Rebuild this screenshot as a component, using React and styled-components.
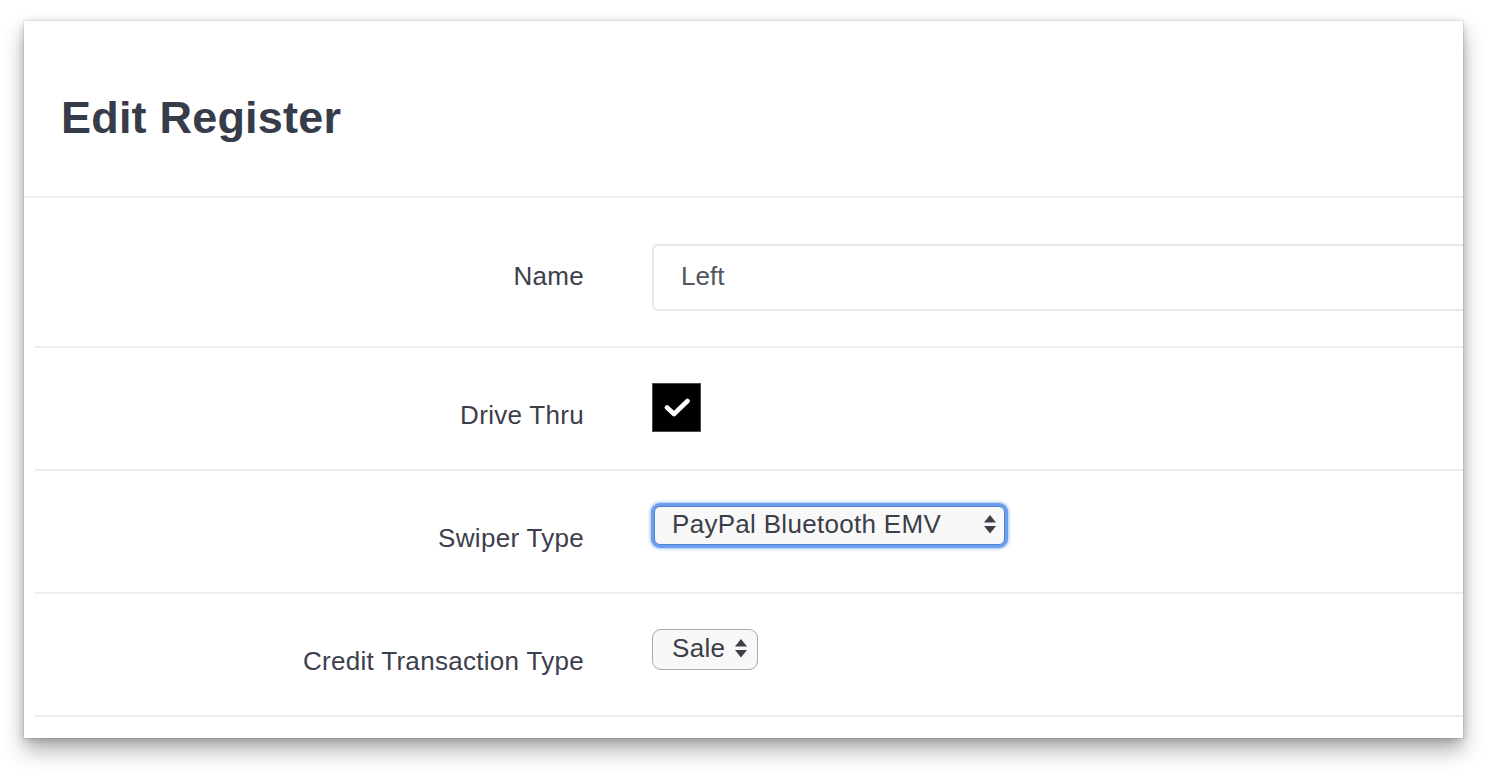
import React from "react";
import styled, { createGlobalStyle } from "styled-components";

const GlobalStyle = createGlobalStyle`
  html, body {
    margin: 0;
    background: #ffffff;
  }
  body {
    font-family: "Liberation Sans", Arial, sans-serif;
  }
`;

const Page = styled.div`
  padding: 21px 33px 38px 24px;
`;

const Window = styled.div`
  width: 1439px;
  height: 717px;
  background: #ffffff;
  overflow: hidden;
  box-shadow: 0 0 0 1px rgba(0, 0, 0, 0.06), 0 12px 20px rgba(0, 0, 0, 0.32),
    0 2px 8px rgba(0, 0, 0, 0.18);
`;

const Header = styled.div`
  height: 177px;
  display: flex;
  align-items: center;
  padding: 18px 0 0 37px;
  box-sizing: border-box;
  border-bottom: 2px solid #ededed;
`;

const Title = styled.h1`
  margin: 0;
  font-size: 45px;
  font-weight: 700;
  color: #363c4a;
  letter-spacing: 0.2px;
`;

const Form = styled.div`
  padding: 11px 0 0 11px;
`;

const Row = styled.div`
  display: grid;
  grid-template-columns: 549px 1fr;
  column-gap: 68px;
  align-items: start;
  padding: 35px 0;
  border-bottom: 2px solid #ededed;
`;

const Label = styled.div`
  padding: 17px 0 3px;
  line-height: 31px;
  font-size: 26px;
  letter-spacing: 0.3px;
  color: #3b404c;
  text-align: right;
`;

const TextInput = styled.div`
  width: 1000px;
  height: 67px;
  box-sizing: border-box;
  border: 2px solid #e8e8e8;
  border-radius: 6px;
  display: flex;
  align-items: center;
  padding: 0 0 2px 27px;
  font-size: 26px;
  color: #51565e;
`;

const CheckBox = styled.div`
  width: 49px;
  height: 49px;
  box-sizing: border-box;
  background: #000000;
  border: 1px solid #4a4a4a;
  display: flex;
  align-items: center;
  justify-content: center;
`;

const SelectBox = styled.div`
  width: ${(p) => p.$width}px;
  height: ${(p) => p.$height}px;
  box-sizing: border-box;
  display: flex;
  align-items: center;
  justify-content: space-between;
  padding: 0 ${(p) => p.$padRight}px 2px ${(p) => p.$padLeft}px;
  background: #f8f8f8;
  border-radius: ${(p) => (p.$focused ? 6 : 9)}px;
  border: ${(p) => (p.$focused ? "1.5px solid #4d82d6" : "1.5px solid #a9a9a9")};
  box-shadow: ${(p) =>
    p.$focused
      ? "0 0 0 3px #6b9fee, 0 0 3px 4px rgba(90, 145, 230, 0.55)"
      : "none"};
  margin-left: ${(p) => (p.$focused ? 2 : 0)}px;
  font-size: 26px;
  letter-spacing: 0.3px;
  color: #3a3f48;
`;

const Arrows = () => (
  <svg width="12" height="19" viewBox="0 0 12 19">
    <path d="M6 0 L12 7.5 L0 7.5 Z" fill="#3a3f48" />
    <path d="M0 11 L12 11 L6 18.5 Z" fill="#3a3f48" />
  </svg>
);

const Check = () => (
  <svg width="26" height="19" viewBox="0 0 26 19">
    <path
      d="M3 9.5 L10 16 L23.5 3"
      fill="none"
      stroke="#ffffff"
      strokeWidth="4.6"
      strokeLinecap="round"
      strokeLinejoin="round"
    />
  </svg>
);

export default function App() {
  return (
    <Page>
      <GlobalStyle />
      <Window>
        <Header>
          <Title>Edit Register</Title>
        </Header>
        <Form>
          <Row>
            <Label>Name</Label>
            <TextInput>Left</TextInput>
          </Row>
          <Row>
            <Label>Drive Thru</Label>
            <CheckBox>
              <Check />
            </CheckBox>
          </Row>
          <Row>
            <Label>Swiper Type</Label>
            <SelectBox $focused $width={351} $height={39} $padLeft={17} $padRight={8}>
              <span>PayPal Bluetooth EMV</span>
              <Arrows />
            </SelectBox>
          </Row>
          <Row>
            <Label>Credit Transaction Type</Label>
            <SelectBox $width={106} $height={41} $padLeft={19} $padRight={10}>
              <span>Sale</span>
              <Arrows />
            </SelectBox>
          </Row>
        </Form>
      </Window>
    </Page>
  );
}
